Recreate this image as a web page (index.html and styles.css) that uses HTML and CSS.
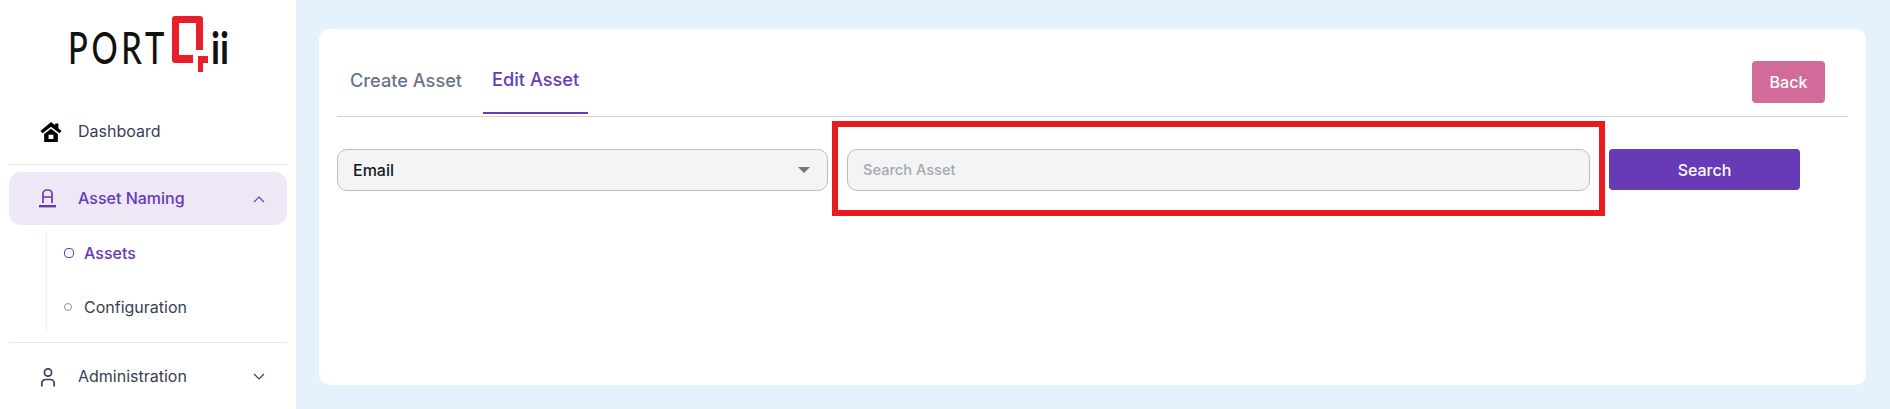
FILE: index.html
```html
<!DOCTYPE html>
<html lang="en">
  <head>
    <meta charset="UTF-8" />
    <meta name="viewport" content="width=device-width, initial-scale=1.0" />
    <title>Asset Naming</title>
    <link rel="stylesheet" href="styles.css">
  </head>

  <body>
    <aside class="sidebar">
      <div class="logo">
        <svg width="190" height="70" viewBox="0 0 190 70">
          <text x="9" y="54" class="logo-text" textLength="100" lengthAdjust="spacingAndGlyphs">PORT</text>
          <path class="logo-q" d="M116 6H141a3 3 0 0 1 3 3V40H137V13H120V45H134V53H116a3 3 0 0 1-3-3V9a3 3 0 0 1 3-3ZM139 46H149V53H144V62H139Z" />
          <text x="152" y="54" class="logo-text logo-ii" textLength="18" lengthAdjust="spacingAndGlyphs">ii</text>
        </svg>
      </div>

      <a class="nav-item">
        <svg class="nav-icon" width="22" height="20" viewBox="0 0 20 19">
          <path fill="#000" fill-rule="evenodd" d="M10 0 0 8.5l2 2.2 8-6.2 8 6.2 2-2.2-3-2.6V1.5h-3V3zM3.5 11.5 10 6.5l6.5 5V19h-13zM7.7 12v4.2h4.6V12z" />
        </svg>
        <span>Dashboard</span>
      </a>
      <div class="nav-divider"></div>

      <a class="nav-item active">
        <svg class="nav-icon" width="22" height="24" viewBox="1 0 22 24">
          <path fill="none" stroke="#673ab7" stroke-width="1.7" d="M4 16V6.5a3.5 3.5 0 0 1 3.5-3.5h2a3.5 3.5 0 0 1 3.5 3.5V16M4 10h9" />
          <path fill="#673ab7" d="M0 18h17v2.4H0z" />
        </svg>
        <span>Asset Naming</span>
        <svg class="chevron" width="12" height="8" viewBox="0 0 12 8"><path d="M1 7l5-5 5 5" /></svg>
      </a>

      <div class="submenu">
        <a class="sub-item current"><i class="dot"></i>Assets</a>
        <a class="sub-item"><i class="dot"></i>Configuration</a>
      </div>
      <div class="nav-divider"></div>

      <a class="nav-item">
        <svg class="nav-icon" width="22" height="22" viewBox="0 0 22 22">
          <circle cx="8" cy="6.5" r="3.6" fill="none" stroke="#364152" stroke-width="1.7" />
          <path fill="none" stroke="#364152" stroke-width="1.7" d="M1.8 20.5v-3a4 4 0 0 1 4-4h4.4a4 4 0 0 1 4 4v3" />
        </svg>
        <span>Administration</span>
        <svg class="chevron" width="12" height="8" viewBox="0 0 12 8"><path d="M1 1l5 5 5-5" /></svg>
      </a>
    </aside>

    <main class="content">
      <section class="card">
        <div class="tab-bar">
          <div class="tabs">
            <button class="tab">Create Asset</button>
            <button class="tab selected">Edit Asset</button>
          </div>
          <button class="back-btn">Back</button>
        </div>

        <div class="search-row">
          <div class="select-box">
            <span>Email</span>
            <i class="caret"></i>
          </div>
          <div class="input-wrap">
            <input type="text" class="search-input" placeholder="Search Asset" />
            <div class="highlight"></div>
          </div>
          <button class="search-btn">Search</button>
        </div>
      </section>
    </main>
  </body>
</html>
```

FILE: styles.css
```css
* {
  margin: 0;
  padding: 0;
  box-sizing: border-box;
}

body {
  font-family: Inter, "Liberation Sans", sans-serif;
  background-color: #e3f2fd;
  color: #364152;
  display: flex;
  height: 409px;
  overflow: hidden;
}

/* Sidebar */
.sidebar {
  width: 296px;
  flex-shrink: 0;
  background: white;
  padding: 0 9px;
}

.logo {
  height: 105px;
  padding: 10px 0 0 50px;
}

.logo svg {
  display: block;
}

.logo-text {
  font-family: Lato, sans-serif;
  font-size: 44px;
  font-weight: 500;
  letter-spacing: 5px;
  fill: #111;
}

.logo-ii {
  font-weight: 700;
  letter-spacing: 0;
}

.logo-q {
  fill: #e81f2a;
}

.nav-item {
  display: flex;
  align-items: center;
  height: 53px;
  padding-left: 31px;
  padding-right: 22px;
  font-size: 16px;
  border-radius: 12px;
}

.nav-item span {
  flex: 1;
  padding-bottom: 1px;
}

.nav-icon {
  width: 22px;
  margin-right: 16px;
  flex-shrink: 0;
  overflow: visible;
}

.nav-item.active {
  background: #ede7f6;
  color: #673ab7;
  font-weight: 500;
}

.chevron {
  fill: none;
  stroke: #364152;
  stroke-width: 1.2;
}

.active .chevron {
  stroke: #673ab7;
}

.nav-divider {
  height: 1px;
  background: #e3e8ef;
  margin: 6px 0 7px;
}

.submenu {
  margin: 5px 0 11px 37px;
  border-left: 1px solid #e3f2fd;
  height: 101px;
  padding-left: 17px;
  display: flex;
  flex-direction: column;
  gap: 8px;
}

.sub-item {
  height: 46px;
  font-size: 16px;
  display: flex;
  align-items: center;
}

.sub-item.current {
  color: #673ab7;
  font-weight: 500;
}

.dot {
  width: 8px;
  height: 8px;
  margin-right: 12px;
  border: 1px solid #8a8f99;
  border-radius: 50%;
}

.current .dot {
  border-color: #673ab7;
  width: 10px;
  height: 10px;
  margin-right: 10px;
  border-radius: 4px;
}

/* Main card */
.content {
  flex: 1;
  padding: 29px 24px 24px 23px;
}

.card {
  background: white;
  border-radius: 10px;
  height: 356px;
  padding: 0 18px;
}

.tab-bar {
  display: flex;
  justify-content: space-between;
  align-items: flex-start;
  height: 88px;
  border-bottom: 1px solid #d3d3d3;
  padding-right: 23px;
  padding-left: 4px;
}

.tabs {
  display: flex;
  gap: 12px;
}

.tab {
  background: none;
  border: none;
  font-family: inherit;
  font-size: 18.2px;
  font-weight: 500;
  color: #697586;
  height: 85px;
  padding: 17px 9px 0;
}

.tab.selected {
  color: #673ab7;
  border-bottom: 2px solid #673ab7;
}

.back-btn {
  margin-top: 32px;
  width: 73px;
  height: 42px;
  background-color: #d36b9a;
  color: white;
  border: none;
  border-radius: 4px;
  font-family: inherit;
  font-size: 16px;
  font-weight: 500;
}

.search-row {
  display: flex;
  align-items: flex-start;
  margin-top: 32px;
}

.select-box {
  width: 491px;
  height: 42px;
  background: #f4f4f4;
  border: 1px solid #bdbdbd;
  border-radius: 10px;
  display: flex;
  align-items: center;
  justify-content: space-between;
  padding: 0 17px 1px 15px;
  font-size: 16px;
  font-weight: 500;
  color: #121926;
}

.caret {
  border-left: 6px solid transparent;
  border-right: 6px solid transparent;
  border-top: 6px solid #757575;
}

.input-wrap {
  position: relative;
  margin-left: 19px;
  margin-right: 19px;
}

.search-input {
  display: block;
  width: 743px;
  height: 42px;
  background: #f4f4f4;
  border: 1px solid #bdbdbd;
  border-radius: 10px;
  padding: 0 15px;
  font-family: inherit;
  font-size: 14.6px;
  outline: none;
}

.search-input::placeholder {
  color: #a3a9b5;
  font-weight: 500;
}

/* red annotation drawn on top of the screenshot */
.highlight {
  position: absolute;
  left: -15px;
  top: -28px;
  width: 773px;
  height: 95px;
  border: 6px solid #e81c20;
}

.search-btn {
  width: 191px;
  height: 41px;
  background-color: #673ab7;
  color: white;
  border: none;
  border-radius: 4px;
  font-family: inherit;
  font-size: 16px;
  font-weight: 500;
}
```
